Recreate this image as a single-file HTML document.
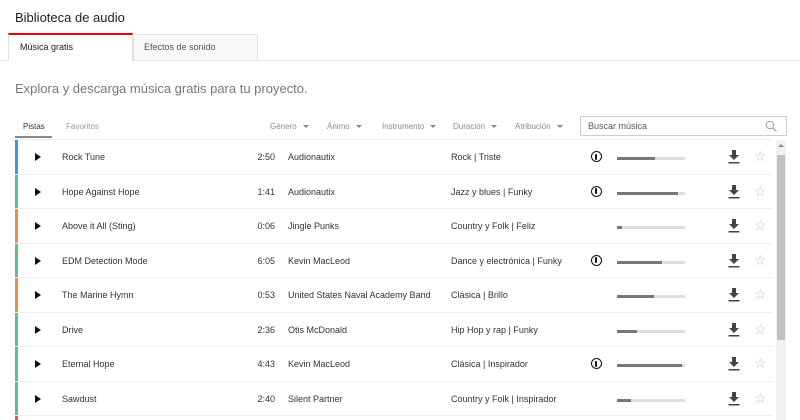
<!DOCTYPE html>
<html><head><meta charset="utf-8"><style>
*{box-sizing:border-box;margin:0;padding:0}
html,body{width:800px;height:420px;overflow:hidden;background:#fff}
body{font-family:"Liberation Sans",sans-serif;color:#222}
#w{position:relative;width:800px;height:420px;overflow:hidden}
.a{position:absolute;white-space:nowrap}
.row{position:absolute;left:15px;width:757px;height:34.5px;border-bottom:1px solid #eee}
.row .edge{position:absolute;left:0;top:0;width:3px;height:100%}
.row .t{position:absolute;top:0;line-height:34px;font-size:9px;color:#333}
.tri{position:absolute;left:20px;top:13px;width:0;height:0;border-left:6px solid #111;border-top:4px solid transparent;border-bottom:4px solid transparent}
.bar{position:absolute;left:602px;top:17px;width:68px;height:3px;background:#ddd}
.bar i{position:absolute;left:0;top:0;height:3px;background:#777}
.dl{position:absolute;left:713px;top:10px}
.st{position:absolute;left:739px;top:9px;color:#c4c4c4;font-size:14px;line-height:14px}
.att{position:absolute;left:576px;top:11px;width:11px;height:11px;border:1.3px solid #111;border-radius:50%}
.att:after{content:"";position:absolute;left:3px;top:1.5px;width:2.4px;height:6px;background:#111;border-radius:1px}
.f{font-size:8px;color:#888}
.f:after{content:"";display:inline-block;margin-left:6px;vertical-align:middle;border-top:3px solid #888;border-left:3px solid transparent;border-right:3px solid transparent}
</style></head><body><div id="w">
<div class="a" style="left:15px;top:10px;font-size:13px;color:#222">Biblioteca de audio</div>
<div class="a" style="left:0;top:60px;width:800px;height:1px;background:#e2e2e2"></div>
<div class="a" style="left:8px;top:33px;width:125px;height:28px;background:#fff;border-left:1px solid #e2e2e2;border-right:1px solid #e2e2e2;border-top:2px solid #e00"></div>
<div class="a" style="left:20px;top:42px;font-size:9px;color:#222">Música gratis</div>
<div class="a" style="left:133px;top:34px;width:125px;height:26px;background:#f8f8f8;border:1px solid #e2e2e2;border-bottom:none"></div>
<div class="a" style="left:144px;top:42px;font-size:9px;color:#555">Efectos de sonido</div>
<div class="a" style="left:15px;top:81px;font-size:13px;color:#777">Explora y descarga música gratis para tu proyecto.</div>
<div class="a" style="left:23px;top:122px;font-size:8px;color:#333">Pistas</div>
<div class="a" style="left:15px;top:136px;width:37px;height:2px;background:#888"></div>
<div class="a" style="left:66px;top:122px;font-size:8px;color:#999">Favoritos</div>
<div class="a f" style="left:270px;top:122px">Género</div>
<div class="a f" style="left:327px;top:122px">Ánimo</div>
<div class="a f" style="left:382px;top:122px">Instrumento</div>
<div class="a f" style="left:453px;top:122px">Duración</div>
<div class="a f" style="left:515px;top:122px">Atribución</div>
<div class="a" style="left:580px;top:116px;width:207px;height:20px;border:1px solid #ccc"></div>
<div class="a" style="left:588px;top:121px;font-size:9px;color:#555">Buscar música</div>
<svg class="a" style="left:765px;top:120px" width="12" height="12" viewBox="0 0 12 12"><circle cx="5" cy="5" r="3.8" fill="none" stroke="#999" stroke-width="1"/><path d="M8 8l3.5 3.5" stroke="#999" stroke-width="1.2"/></svg>
<div class="a" style="left:15px;top:139px;width:757px;height:1px;background:#eee"></div>
<div class="a" style="left:776px;top:140px;width:10px;height:280px;background:#f1f1f1"></div>
<div class="a" style="left:777px;top:155px;width:8px;height:185px;background:#c1c1c1"></div>
<div class="a" style="left:778px;top:144px;border-bottom:3px solid #888;border-left:3px solid transparent;border-right:3px solid transparent"></div>
<div id="rows"></div>
<div class="a" style="left:15px;top:416px;width:3px;height:4px;background:#e05a5a"></div>
</div>
<script>
var d=[["#3a9ad9","Rock Tune","2:50","Audionautix","Rock | Triste",1,38],
["#5cc08e","Hope Against Hope","1:41","Audionautix","Jazz y blues | Funky",1,61],
["#e8904c","Above it All (Sting)","0:06","Jingle Punks","Country y Folk | Feliz",0,5],
["#5cc08e","EDM Detection Mode","6:05","Kevin MacLeod","Dance y electrónica | Funky",1,45],
["#e8904c","The Marine Hymn","0:53","United States Naval Academy Band","Clásica | Brillo",0,37],
["#5cc08e","Drive","2:36","Otis McDonald","Hip Hop y rap | Funky",0,20],
["#5cc08e","Eternal Hope","4:43","Kevin MacLeod","Clásica | Inspirador",1,65],
["#5cc08e","Sawdust","2:40","Silent Partner","Country y Folk | Inspirador",0,14]];
var h="";
d.forEach(function(r,i){
h+='<div class="row" style="top:'+(140+i*34.5)+'px"><div class="edge" style="background:'+r[0]+'"></div><div class="tri"></div><div class="t" style="left:47px">'+r[1]+'</div><div class="t" style="left:225px;width:35px;text-align:right">'+r[2]+'</div><div class="t" style="left:273px">'+r[3]+'</div><div class="t" style="left:436px">'+r[4]+'</div>'+(r[5]?'<div class="att"></div>':'')+'<div class="bar"><i style="width:'+r[6]+'px"></i></div><svg class="dl" width="12" height="14" viewBox="0 0 12 14"><path d="M4 0h4v5h3l-5 5-5-5h3z" fill="#444"/><rect x="0.5" y="12" width="11" height="1.5" fill="#444"/></svg><div class="st">☆</div></div>';});
document.getElementById("rows").innerHTML=h;
</script>
</body></html>
